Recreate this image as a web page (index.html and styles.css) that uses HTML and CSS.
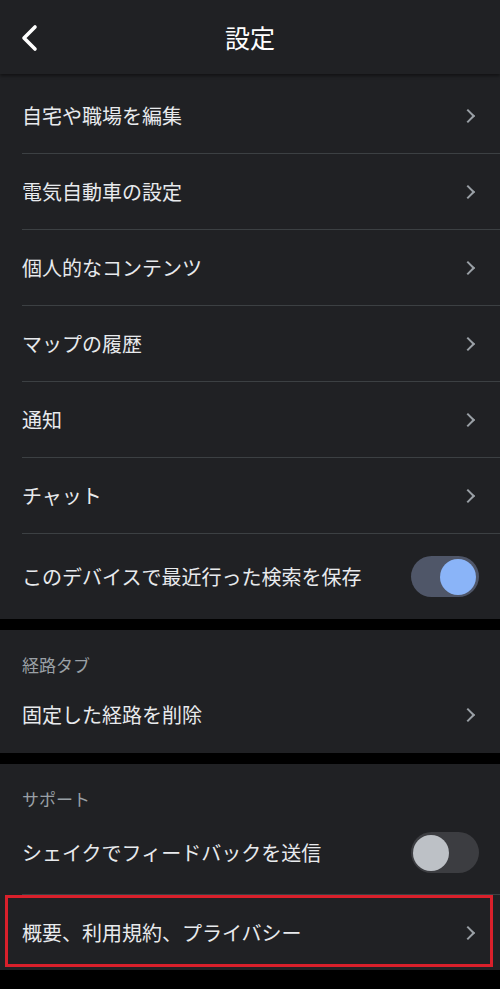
FILE: index.html
```html
<!DOCTYPE html>
<html lang="ja">
<head>
    <meta charset="UTF-8">
    <meta name="viewport" content="width=device-width, initial-scale=1.0">
    <title>設定</title>
    <link rel="stylesheet" href="styles.css">
</head>
<body>
    <div class="header">
        <svg class="back" width="20" height="28" viewBox="0 0 20 28">
            <path d="M15 3 L4 14 L15 25" fill="none" stroke="#ffffff" stroke-width="3.6" stroke-linecap="round" stroke-linejoin="round"/>
        </svg>
        <h1 class="title">設定</h1>
    </div>

    <div class="section first">
        <div class="row"><span>自宅や職場を編集</span><span class="chevron"></span></div>
        <div class="row"><span>電気自動車の設定</span><span class="chevron"></span></div>
        <div class="row"><span>個人的なコンテンツ</span><span class="chevron"></span></div>
        <div class="row"><span>マップの履歴</span><span class="chevron"></span></div>
        <div class="row"><span>通知</span><span class="chevron"></span></div>
        <div class="row"><span>チャット</span><span class="chevron"></span></div>
        <div class="row toggle-row last"><span>このデバイスで最近行った検索を保存</span><span class="switch on"><span class="knob"></span></span></div>
    </div>

    <div class="section">
        <div class="section-title">経路タブ</div>
        <div class="row last"><span>固定した経路を削除</span><span class="chevron"></span></div>
    </div>

    <div class="section">
        <div class="section-title">サポート</div>
        <div class="row toggle-row"><span>シェイクでフィードバックを送信</span><span class="switch"><span class="knob"></span></span></div>
        <div class="row last marked"><span>概要、利用規約、プライバシー</span><span class="chevron"></span></div>
    </div>
</body>
</html>
```

FILE: styles.css
```css
* {
    margin: 0;
    padding: 0;
    box-sizing: border-box;
}

body {
    width: 500px;
    height: 989px;
    background-color: #000;
    font-family: "Noto Sans CJK JP", "Noto Sans", sans-serif;
    color: #e8eaed;
    overflow: hidden;
}

.header {
    height: 74px;
    background-color: #202124;
    display: flex;
    align-items: center;
    justify-content: center;
    position: relative;
    box-shadow: 0 2px 3px rgba(0, 0, 0, 0.45);
    z-index: 1;
}

.back {
    position: absolute;
    left: 20px;
    top: 24px;
}

.title {
    font-size: 25px;
    font-weight: 400;
    color: #fff;
    line-height: 30px;
}

.section {
    background-color: #202124;
    margin-bottom: 11px;
}

.section.first {
    padding-top: 4px;
}

.section-title {
    height: 47px;
    padding: 24px 22px 0;
    font-size: 17px;
    line-height: 22px;
    color: #9aa0a6;
}

.row {
    height: 76px;
    margin-left: 22px;
    padding-right: 24px;
    display: flex;
    align-items: center;
    justify-content: space-between;
    border-bottom: 1px solid #3c4043;
    font-size: 20px;
    line-height: 26px;
    position: relative;
}

.row.last {
    border-bottom: none;
}

.toggle-row {
    height: 85px;
    padding-right: 21px;
}

.section .toggle-row:not(.last) {
    height: 84px;
}

.chevron {
    width: 10px;
    height: 10px;
    border-top: 2.6px solid #9aa0a6;
    border-right: 2.6px solid #9aa0a6;
    transform: rotate(45deg);
    margin-right: 3px;
}

.switch {
    width: 68px;
    height: 41px;
    border-radius: 21px;
    background-color: #3c3d41;
    display: flex;
    align-items: center;
    padding: 0 2px;
}

.switch .knob {
    width: 36px;
    height: 36px;
    border-radius: 50%;
    background-color: #bdc1c6;
}

.switch.on {
    background-color: #4f5668;
    justify-content: flex-end;
    padding: 0 3px;
}

.switch.on .knob {
    background-color: #8ab4f8;
}

.marked {
    height: 75px;
}

.marked::after {
    content: "";
    position: absolute;
    left: -17px;
    right: 7px;
    top: 0;
    bottom: 3px;
    border: 3px solid #d9202b;
}
```
